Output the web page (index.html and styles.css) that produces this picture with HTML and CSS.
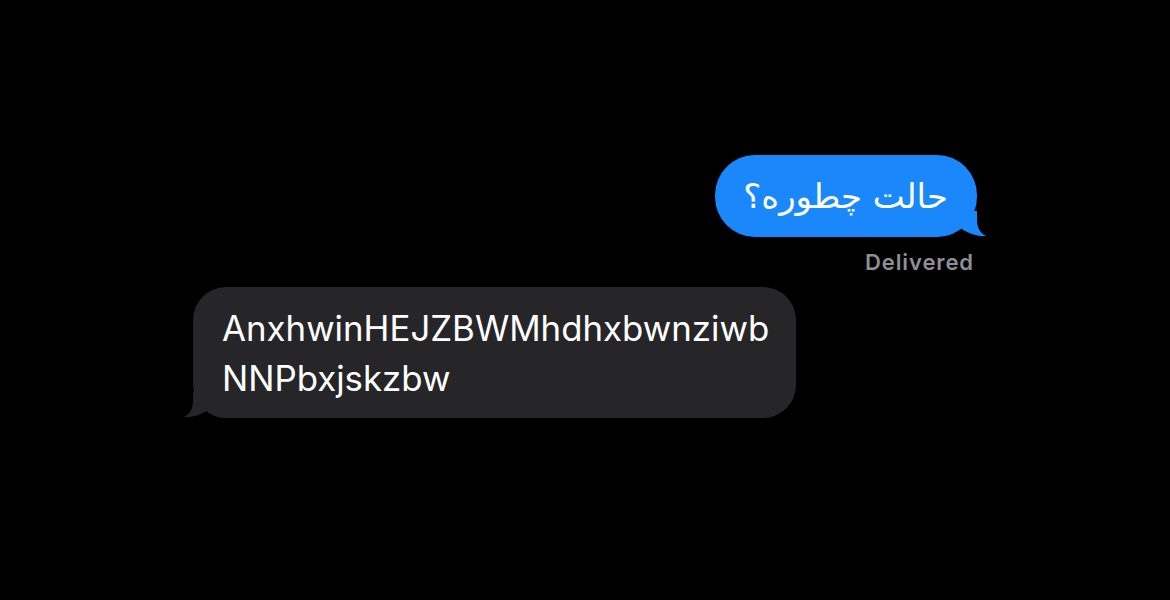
FILE: index.html
```html
<!DOCTYPE html>
<html lang="en">
<head>
<meta charset="utf-8">
<link rel="stylesheet" href="styles.css">
</head>
<body>
<main class="chat">
  <div class="bubble sent" dir="rtl" lang="fa">حالت چطوره؟<svg class="tail tail-sent" width="30" height="30" viewBox="0 0 30 30"><path d="M20 4 L20 13 C20 21 23.5 26.5 29.3 29 C22 29.8 12 27 4 21.5 L0 13 L0 4 Z"/></svg></div>
  <div class="status">Delivered</div>
  <div class="bubble received">AnxhwinHEJZBWMhdhxbwnziwb<wbr>NNPbxjskzbw<svg class="tail tail-received" width="30" height="30" viewBox="0 0 30 30"><path d="M20 4 L20 13 C20 21 23.5 26.5 29.3 29 C22 29.8 12 27 4 21.5 L0 13 L0 4 Z"/></svg></div>
</main>
</body>
</html>
```

FILE: styles.css
```css
html, body {
  margin: 0;
  padding: 0;
  background: #000;
}

.chat {
  display: flex;
  flex-direction: column;
  padding: 155px 193px 0;
  font-family: Inter, "Noto Sans", "DejaVu Sans", sans-serif;
}

.bubble {
  position: relative;
  color: #fff;
  line-height: 50px;
}

.sent {
  align-self: flex-end;
  background: #1a88fb;
  border-radius: 40px;
  padding: 16px 29px 16px 28px;
  font-family: "DejaVu Sans", sans-serif;
  font-size: 34px;
}

.received {
  align-self: flex-start;
  background: #262629;
  border-radius: 33px;
  padding: 15.5px 28px 15.5px 29px;
  font-size: 34.8px;
  max-width: 546px;
  margin-top: 12px;
}

.tail {
  position: absolute;
  bottom: 0;
}

.tail-sent {
  right: -10px;
  fill: #1a88fb;
}

.tail-received {
  left: -10px;
  fill: #262629;
  transform: scaleX(-1);
}

.status {
  align-self: flex-end;
  margin-top: 12px;
  margin-right: 3px;
  color: #8e8e93;
  font-size: 22px;
  font-weight: 600;
  letter-spacing: 0.9px;
  line-height: 26px;
}
```
